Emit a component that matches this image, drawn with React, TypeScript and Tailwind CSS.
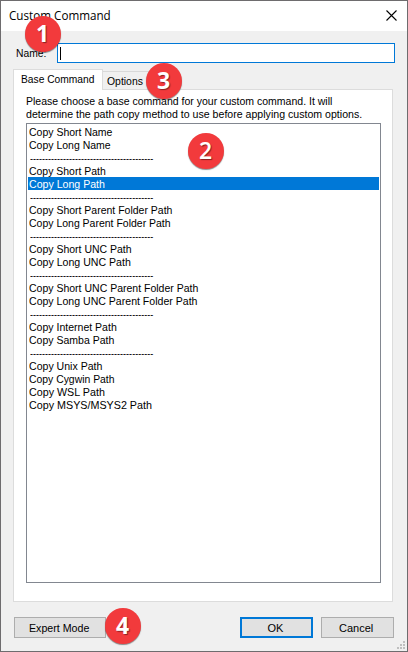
import { useLayoutEffect, useRef } from "react";

const commands = [
  ["Copy Short Name", 83],
  ["Copy Long Name", 82],
  ["-", 123],
  ["Copy Short Path", 77],
  ["Copy Long Path", 76],
  ["-", 123],
  ["Copy Short Parent Folder Path", 143],
  ["Copy Long Parent Folder Path", 142],
  ["-", 123],
  ["Copy Short UNC Path", 103],
  ["Copy Long UNC Path", 102],
  ["-", 123],
  ["Copy Short UNC Parent Folder Path", 169],
  ["Copy Long UNC Parent Folder Path", 168],
  ["-", 123],
  ["Copy Internet Path", 88],
  ["Copy Samba Path", 85],
  ["-", 123],
  ["Copy Unix Path", 73],
  ["Copy Cygwin Path", 86],
  ["Copy WSL Path", 76],
  ["Copy MSYS/MSYS2 Path", 123],
] as [string, number][];

/** A single line of text condensed or widened to a given width. */
function Fit({ text, width, className = "" }: { text: string; width: number; className?: string }) {
  const ref = useRef<HTMLSpanElement>(null);
  useLayoutEffect(() => {
    const el = ref.current;
    if (el) el.style.transform = `scaleX(${width / el.offsetWidth})`;
  }, [text, width]);
  return (
    <span className="block shrink-0" style={{ width }}>
      <span ref={ref} className={`inline-block origin-left whitespace-pre align-top ${className}`}>
        {text}
      </span>
    </span>
  );
}

function Badge({ n, className }: { n: number; className: string }) {
  return (
    <div
      className={`absolute flex size-9 items-center justify-center rounded-full bg-[#f23a3c] font-['Open_Sans',sans-serif] text-[23px] leading-none text-white shadow-[0_1px_1px_#00000070] [text-shadow:1px_1px_1px_#00000070] ${className}`}
    >
      {n}
    </div>
  );
}

export default function App() {
  return (
    <div className="relative flex h-[652px] w-[408px] flex-col border border-[#6e6c6e] bg-[#f0f0f0] font-['Liberation_Sans',Arial,sans-serif] text-[11px] leading-[13px] text-black">
      <header className="flex h-[30px] shrink-0 items-center justify-between bg-white pr-[10px] pl-2">
        <Fit text="Custom Command" width={102} className="font-['Open_Sans',sans-serif] text-[12px] leading-4" />
        <svg width="11" height="11" viewBox="0 0 11 11" className="mb-px" aria-label="Close">
          <path d="M.5 .5l10 10M10.500 .5l-10 10" stroke="#000" strokeWidth="1.1" fill="none" />
        </svg>
      </header>

      <div className="mt-3 flex h-5 shrink-0 items-center pl-[15px]">
        <Fit text="Name:" width={30} />
        <div className="ml-[11px] flex h-5 w-[338px] items-center border border-[#0078d7] bg-white pl-0.5">
          <div className="h-[13px] w-px bg-black" />
        </div>
      </div>

      <div className="mt-[6px] ml-3 flex h-5 shrink-0 items-end">
        <div className="z-10 -mb-px flex h-[21px] w-[90px] border border-b-0 border-[#dcdcdc] bg-white pt-[3px] pl-[7px]">
          <Fit text="Base Command" width={73.5} />
        </div>
        <div className="flex h-[18px] w-[49px] border border-b-0 border-l-0 border-[#d9d9d9] pt-[3px] pl-1">
          <Fit text="Options" width={36} />
        </div>
      </div>

      <section className="ml-3 h-[513px] w-[380px] shrink-0 border border-[#dcdcdc] bg-white px-3 pt-[5px]">
        <Fit text="Please choose a base command for your custom command. It will" width={306} />
        <Fit text="determine the path copy method to use before applying custom options." width={336} />
        <ul className="mt-[2px] h-[460px] w-[355px] border border-[#828790] p-px">
          {commands.map(([text, width], i) => (
            <li key={i} className={`h-[13px] pl-px ${i === 4 ? "bg-[#0078d7] text-white" : ""}`}>
              <Fit
                text={text === "-" ? "-----------------------------------------" : text}
                width={width}
                className={text === "-" ? "ml-px leading-[15px]" : "leading-[15px]"}
              />
            </li>
          ))}
        </ul>
      </section>

      <footer className="mt-[15px] flex h-[21px] shrink-0 pl-[13px]">
        <div className="flex w-[92px] items-center justify-center border border-[#adadad] bg-[#e1e1e1] pt-px pr-0.5">
          <Fit text="Expert Mode" width={60} />
        </div>
        <div className="ml-[134px] flex w-[73px] items-center justify-center border-2 border-[#0078d7] bg-[#e1e1e1] pt-px pr-0.5">
          <Fit text="OK" width={16} />
        </div>
        <div className="ml-2 flex w-[73px] items-center justify-center border border-[#adadad] bg-[#e1e1e1] pt-px pr-[3px]">
          <Fit text="Cancel" width={34} />
        </div>
      </footer>

      <svg className="absolute right-[2px] bottom-[2px]" width="8" height="8" fill="#bfbfbf" shapeRendering="crispEdges">
        <path d="M6 0h2v2h-2zM3 3h2v2h-2zM6 3h2v2h-2zM0 6h2v2h-2zM3 6h2v2h-2zM6 6h2v2h-2z" />
      </svg>

      <Badge n={1} className="top-[14.500px] left-[23.500px] font-bold" />
      <Badge n={2} className="top-[131.500px] left-[186.500px] font-semibold" />
      <Badge n={3} className="top-[61.500px] left-[144.500px] font-bold" />
      <Badge n={4} className="top-[606.500px] left-[103.500px] font-bold" />
    </div>
  );
}
